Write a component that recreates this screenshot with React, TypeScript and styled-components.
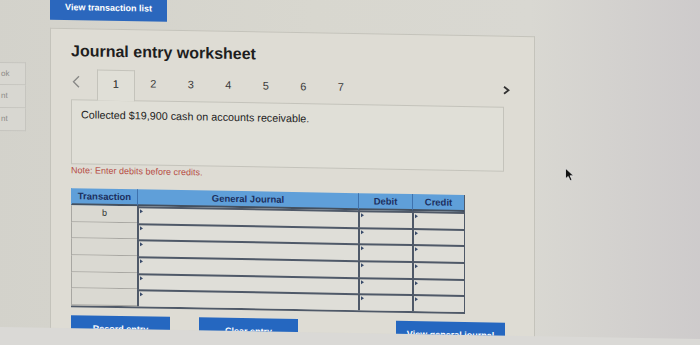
import styled, { createGlobalStyle } from "styled-components";

const GlobalStyle = createGlobalStyle`
  html, body {
    margin: 0;
    padding: 0;
  }
  body {
    font-family: "Liberation Sans", Arial, sans-serif;
    background: #d9d8d5;
  }
`;

const Frame = styled.div`
  width: 700px;
  height: 345px;
  overflow: hidden;
  background: #dad9d6;
`;

// the photo is taken slightly askew, so the whole screen gets a small skew
const Screen = styled.div`
  position: relative;
  width: 720px;
  height: 341px;
  margin: -8px 0 0 -10px;
  padding: 8px 0 0 10px;
  box-sizing: border-box;
  overflow: hidden;
  display: flex;
  background: linear-gradient(90deg, #d3d2cb 0%, #d8d7cf 45%, #d9d8d2 75%, #cdcacb 100%);
  transform: skewY(1deg);
  transform-origin: 360px 0;
`;

const Sidebar = styled.nav`
  width: 26px;
  flex: none;
  padding-top: 68px;
  display: flex;
  flex-direction: column;
`;

const SideItem = styled.div`
  height: 23px;
  box-sizing: border-box;
  border-right: 1px solid #c6c5bf;
  border-bottom: 1px solid #c6c5bf;
  background: #d8d7d1;
  color: #8c8b87;
  font-size: 8px;
  line-height: 22px;
  padding-left: 1px;
  &:first-child {
    border-top: 1px solid #c6c5bf;
  }
`;

const Main = styled.main`
  width: 485px;
  margin-left: 24px;
  display: flex;
  flex-direction: column;
`;

const TopButton = styled.button`
  width: 117px;
  height: 27px;
  margin-top: -2px;
  flex: none;
  border: none;
  border-radius: 0;
  background: #2b67bd;
  color: #fff;
  font-family: inherit;
  font-weight: bold;
  font-size: 9px;
  padding: 0;
`;

const Panel = styled.section`
  flex: 1;
  margin-top: 8px;
  border: 1px solid #c4c3bb;
  border-bottom: none;
  background: #dedcd4;
  padding: 12px 22px 0 20px;
  display: flex;
  flex-direction: column;
`;

const Title = styled.h2`
  margin: 0;
  font-size: 16px;
  line-height: 20px;
  font-weight: bold;
  color: #1e1e1e;
`;

const TabRow = styled.div`
  display: flex;
  height: 30px;
  margin-top: 8px;
`;

const Arrow = styled.div<{ $next?: boolean }>`
  width: ${(p) => (p.$next ? "8px" : "26px")};
  margin-left: ${(p) => (p.$next ? "auto" : "0")};
  margin-right: ${(p) => (p.$next ? "1px" : "0")};
  padding-left: ${(p) => (p.$next ? "0" : "1px")};
  padding-bottom: ${(p) => (p.$next ? "4px" : "6px")};
  box-sizing: border-box;
  display: flex;
  align-items: center;
`;

const Tab = styled.div<{ $active?: boolean }>`
  width: 37.5px;
  box-sizing: border-box;
  display: flex;
  align-items: center;
  justify-content: center;
  padding-bottom: 5px;
  font-size: 11px;
  color: ${(p) => (p.$active ? "#222" : "#3a3a3a")};
  position: relative;
  z-index: 1;
  margin-bottom: ${(p) => (p.$active ? "-1px" : "0")};
  border: ${(p) => (p.$active ? "1px solid #c4c3bb" : "none")};
  border-bottom: none;
  background: ${(p) => (p.$active ? "#e0dfd7" : "transparent")};
`;

const DescBox = styled.div`
  width: 433px;
  height: 65px;
  box-sizing: border-box;
  border: 1px solid #c4c3bb;
  background: #e0dfd7;
  padding: 7px 9px;
  font-size: 10.75px;
  line-height: 14px;
  color: #232323;
`;

const Note = styled.p`
  margin: 0;
  font-size: 9px;
  line-height: 12px;
  color: #b64c45;
`;

const Table = styled.div`
  margin-top: 12px;
  width: 393px;
  display: grid;
  grid-template-columns: 66px 221px 54px 52px;
  grid-template-rows: 17px repeat(6, 16.67px);
  border-right: 1.5px solid #4f5968;
  border-bottom: 2px solid #4f5968;
`;

const HeadCell = styled.div<{ $first?: boolean }>`
  background: #5f9fd9;
  color: #1c2f5e;
  font-weight: bold;
  font-size: 9.5px;
  display: flex;
  align-items: center;
  justify-content: center;
  box-sizing: border-box;
  border-left: 1px solid ${(p) => (p.$first ? "#5f9fd9" : "#3f72ad")};
  border-bottom: 2px solid #44505f;
`;

const LabelCell = styled.div`
  background: #dad9d2;
  border-left: 1px solid #a8a7a2;
  border-bottom: 1px solid #a8a7a2;
  box-sizing: border-box;
  font-size: 9px;
  color: #333;
  display: flex;
  justify-content: center;
  padding-top: 2px;
`;

const InputCell = styled.div`
  position: relative;
  background: #dfded8;
  border-left: 2px solid #4f5968;
  border-top: 2px solid #4f5968;
  box-sizing: border-box;
  &::before {
    content: "";
    position: absolute;
    top: 1px;
    left: 1px;
    border-left: 3.5px solid #3a4c6b;
    border-top: 2px solid transparent;
    border-bottom: 2px solid transparent;
  }
`;

const ButtonRow = styled.div`
  display: flex;
  width: 434px;
  margin-top: 8px;
`;

const ActionButton = styled.button<{ $w: number; $gap?: number; $push?: boolean }>`
  width: ${(p) => p.$w}px;
  height: 24px;
  flex: none;
  margin-left: ${(p) => (p.$push ? "auto" : `${p.$gap ?? 0}px`)};
  border: none;
  border-radius: 0;
  background: #2567c0;
  color: #fff;
  font-family: inherit;
  font-weight: bold;
  font-size: 9px;
  line-height: 11px;
  padding: 3px 0 0;
  align-self: flex-start;
  text-align: center;
`;

const Cursor = styled.svg`
  position: absolute;
  left: 575px;
  top: 172px;
`;

const rows = ["b", "", "", "", "", ""];

export default function App() {
  return (
    <Frame>
      <GlobalStyle />
      <Screen>
        <Sidebar>
          <SideItem>ok</SideItem>
          <SideItem>nt</SideItem>
          <SideItem>nt</SideItem>
        </Sidebar>
        <Main>
          <TopButton>View transaction list</TopButton>
          <Panel>
            <Title>Journal entry worksheet</Title>
            <TabRow>
              <Arrow>
                <svg width="8" height="13" viewBox="0 0 8 13">
                  <path d="M7 1 L1.5 6.5 L7 12" fill="none" stroke="#8a8a88" strokeWidth="1.4" />
                </svg>
              </Arrow>
              {[1, 2, 3, 4, 5, 6, 7].map((n) => (
                <Tab key={n} $active={n === 1}>
                  {n}
                </Tab>
              ))}
              <Arrow $next>
                <svg width="7" height="9" viewBox="0 0 7 9">
                  <path d="M1 1 L5.5 4.5 L1 8" fill="none" stroke="#333" strokeWidth="1.8" />
                </svg>
              </Arrow>
            </TabRow>
            <DescBox>Collected $19,900 cash on accounts receivable.</DescBox>
            <Note>Note: Enter debits before credits.</Note>
            <Table>
              <HeadCell $first>Transaction</HeadCell>
              <HeadCell>General Journal</HeadCell>
              <HeadCell>Debit</HeadCell>
              <HeadCell>Credit</HeadCell>
              {rows.map((r, i) => [
                <LabelCell key={`l${i}`}>{r}</LabelCell>,
                <InputCell key={`g${i}`} />,
                <InputCell key={`d${i}`} />,
                <InputCell key={`c${i}`} />,
              ])}
            </Table>
            <ButtonRow>
              <ActionButton $w={99}>Record entry</ActionButton>
              <ActionButton $w={99} $gap={29}>
                Clear entry
              </ActionButton>
              <ActionButton $w={109} $push>
                View general journal
              </ActionButton>
            </ButtonRow>
          </Panel>
        </Main>
        <Cursor width="10" height="14" viewBox="0 0 10 14">
          <path
            d="M0.5 0.5 L0.5 11 L3.2 8.6 L5.2 12.8 L7 12 L5.1 7.9 L8.6 7.9 Z"
            fill="#111"
            stroke="#f4f4f4"
            strokeWidth="0.7"
          />
        </Cursor>
      </Screen>
    </Frame>
  );
}
